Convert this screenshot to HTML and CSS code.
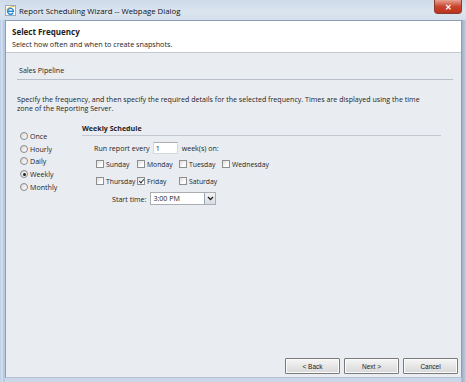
FILE: index.html
```html
<!DOCTYPE html>
<html>
<head>
    <link rel="stylesheet" href="styles.css">
</head>
<body>
    <div class="window">
        <div class="titlebar">
            <span class="ie-icon">
                <svg width="11" height="11" viewBox="0 0 11 11">
                    <rect x="0.5" y="0.5" width="10" height="10" fill="#fff" stroke="#9aa9bc"/>
                    <path d="M2.5 6.2h6A3 3 0 1 0 8.2 7.6" fill="none" stroke="#2a8ad6" stroke-width="1.4"/>
                    <path d="M1.5 4.5c2-2 6-3.5 8-3" fill="none" stroke="#f0b020" stroke-width="1"/>
                </svg>
            </span>
            <span class="title">Report Scheduling Wizard -- Webpage Dialog</span>
            <span class="close">&#x2715;</span>
        </div>
        <div class="client">
            <div class="header">
                <div class="h-title">Select Frequency</div>
                <div class="h-sub">Select how often and when to create snapshots.</div>
            </div>
            <div class="content">
                <div class="report-name">Sales Pipeline</div>
                <p class="desc">Specify the frequency, and then specify the required details for the selected frequency. Times are displayed using the time zone of the Reporting Server.</p>
                <div class="options">
                    <ul class="freq">
                        <li><span class="radio"></span>Once</li>
                        <li><span class="radio"></span>Hourly</li>
                        <li><span class="radio"></span>Daily</li>
                        <li><span class="radio on"></span>Weekly</li>
                        <li><span class="radio"></span>Monthly</li>
                    </ul>
                    <div class="schedule">
                        <div class="sched-title">Weekly Schedule</div>
                        <div class="run-row">Run report every <span class="textbox">1</span> week(s) on:</div>
                        <div class="days">
                            <span class="day"><span class="check"></span>Sunday</span>
                            <span class="day"><span class="check"></span>Monday</span>
                            <span class="day"><span class="check"></span>Tuesday</span>
                            <span class="day"><span class="check"></span>Wednesday</span>
                            <span class="day"><span class="check"></span>Thursday</span>
                            <span class="day"><span class="check on"></span>Friday</span>
                            <span class="day"><span class="check"></span>Saturday</span>
                        </div>
                        <div class="start-row">Start time: <span class="select"><span class="sel-val">3:00 PM</span><span class="sel-btn"><svg width="7" height="5" viewBox="0 0 7 5"><path d="M1 1l2.5 2.5L6 1" fill="none" stroke="#222" stroke-width="1.3"/></svg></span></span></div>
                    </div>
                </div>
                <div class="buttons">
                    <button class="btn">&lt; Back</button>
                    <button class="btn">Next &gt;</button>
                    <button class="btn">Cancel</button>
                </div>
            </div>
        </div>
    </div>
</body>
</html>
```

FILE: styles.css
```css
html, body {
    margin: 0;
    padding: 0;
}
body {
    width: 466px;
    height: 382px;
    overflow: hidden;
    font-family: "Open Sans", "Noto Sans", sans-serif;
    color: #1e1e1e;
}
.window {
    height: 382px;
    display: flex;
    flex-direction: column;
    background: linear-gradient(to right, #b9cde6 0, #d7e3f1 2px, #a9c0dd 4px, #c9d7e8 5px, #c9d7e8 461px, #9fb1c8 462px, #c3cfdd 466px);
}
.titlebar {
    height: 20px;
    display: flex;
    align-items: center;
    position: relative;
    background: linear-gradient(to bottom, #cfdbe9, #dbe5f0 60%, #d4dfec);
}
.ie-icon {
    display: flex;
    margin-left: 5px;
    margin-top: 1px;
}
.title {
    font-size: 7.8px;
    margin-left: 3px;
    margin-top: 1px;
    color: #111;
}
.close {
    position: absolute;
    right: 4px;
    top: 0;
    width: 28px;
    height: 14px;
    border: 1px solid #8c3a2e;
    border-top: none;
    border-radius: 0 0 4px 4px;
    box-sizing: border-box;
    background: linear-gradient(to bottom, #e8a291, #c9452f 50%, #b9321c);
    color: #fff;
    font-size: 8px;
    font-weight: bold;
    text-align: center;
    line-height: 13px;
}
.client {
    flex: 1;
    margin: 0 4px 4px 5px;
    border: 1px solid #8d9db3;
    border-bottom-color: #b4c1d2;
    display: flex;
    flex-direction: column;
    background: #e9ecf1;
}
.header {
    background: #fff;
    border-bottom: 1px solid #c3c9d2;
    padding-left: 6px;
    box-sizing: border-box;
    height: 32px;
}
.h-title {
    font-weight: bold;
    font-size: 8px;
    margin-top: 6px;
    line-height: 10px;
}
.h-sub {
    font-size: 7.2px;
    margin-top: 3px;
    line-height: 9px;
}
.content {
    flex: 1;
    display: flex;
    flex-direction: column;
    padding: 0 8px 0 11px;
    font-size: 7.1px;
}
.report-name {
    margin-top: 13px;
    padding: 0 0 4px 2px;
    border-bottom: 1px solid #b9bfc8;
    line-height: 9px;
}
.desc {
    margin: 15px 16px 0 0;
    line-height: 9px;
}
.options {
    display: flex;
    margin-top: 11px;
}
.freq {
    list-style: none;
    margin: 0;
    padding: 6px 0 0 3px;
    width: 62px;
}
.freq li {
    display: flex;
    align-items: center;
    height: 12.6px;
}
.radio {
    width: 6px;
    height: 6px;
    border: 1px solid #8a8a8a;
    border-radius: 50%;
    background: linear-gradient(135deg, #d8d8d8, #fff);
    margin-right: 2px;
    position: relative;
}
.radio.on::after {
    content: "";
    position: absolute;
    left: 1.5px;
    top: 1.5px;
    width: 3px;
    height: 3px;
    border-radius: 50%;
    background: #222;
}
.schedule {
    flex: 1;
    margin-right: 12px;
}
.sched-title {
    font-weight: bold;
    line-height: 9px;
    padding-bottom: 2px;
    border-bottom: 1px solid #c3c8d0;
}
.run-row {
    display: flex;
    align-items: center;
    margin: 5px 0 0 12px;
    height: 13px;
}
.textbox {
    width: 25px;
    height: 12px;
    box-sizing: border-box;
    background: #fff;
    border: 1px solid #d5d9de;
    border-top-color: #abadb3;
    margin: 0 4px 0 3px;
    padding-left: 2px;
    line-height: 10px;
}
.days {
    display: grid;
    grid-template-columns: 41px 42px 43px auto;
    row-gap: 5px;
    margin: 4px 0 0 14px;
}
.day {
    display: flex;
    align-items: center;
    height: 12px;
    font-size: 6.8px;
}
.check {
    width: 6px;
    height: 6px;
    flex: none;
    border: 1px solid #8e8f8f;
    background: linear-gradient(135deg, #dcdcdc, #fff 70%);
    margin-right: 2px;
    position: relative;
}
.check.on::after {
    content: "";
    position: absolute;
    left: 1.5px;
    top: -0.5px;
    width: 2px;
    height: 4px;
    border: solid #333;
    border-width: 0 1.1px 1.1px 0;
    transform: rotate(40deg);
}
.start-row {
    display: flex;
    align-items: center;
    margin: 5px 0 0 30px;
}
.select {
    display: flex;
    width: 66px;
    height: 13px;
    box-sizing: border-box;
    background: #fff;
    border: 1px solid #abadb3;
    margin-left: 4px;
}
.sel-val {
    flex: 1;
    padding-left: 2px;
    line-height: 11px;
}
.sel-btn {
    width: 10px;
    display: flex;
    align-items: center;
    justify-content: center;
    background: linear-gradient(to bottom, #f3f3f3, #d8dde4);
    border-left: 1px solid #9aa4b0;
}
.buttons {
    margin: auto -5px 3px 0;
    display: flex;
    justify-content: flex-end;
    gap: 4px;
}
.btn {
    width: 55px;
    height: 16px;
    padding: 0;
    font-family: "Liberation Sans", Arial, sans-serif;
    font-size: 6.5px;
    color: #222;
    border: 1px solid #7a7a7a;
    border-radius: 1px;
    background: linear-gradient(to bottom, #f6f6f6, #e6e6e6 50%, #d8d8d8);
    box-shadow: inset 0 0 0 1px #fbfbfb;
}
```
